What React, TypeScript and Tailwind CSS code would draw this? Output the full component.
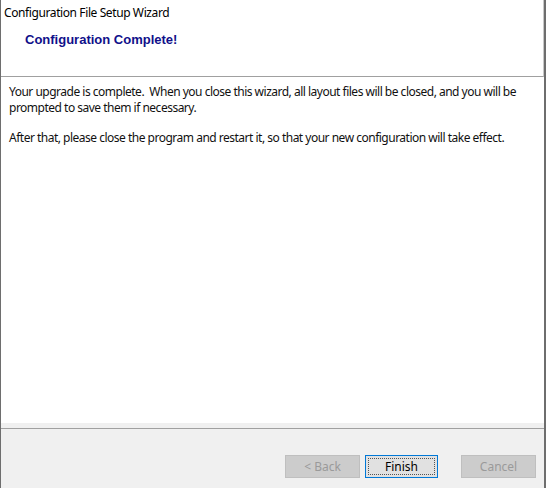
import React from 'react';

const uiFont = { fontFamily: '"Noto Sans", "Open Sans", sans-serif' };

export default function App() {
  return (
    <div
      className="w-[546px] h-[488px] flex flex-col bg-white border-l border-[#6e6e6e] text-[12px] text-black overflow-hidden"
      style={uiFont}
    >
      <div className="flex flex-1 min-h-0">
        <div className="flex flex-col flex-1 min-w-0">
          {/* Header */}
          <div className="h-[77px] border-b border-[#a0a0a0] border-r border-r-[#c8c8c8]">
            <div className="pl-[3px] pt-[5px] leading-[16px] tracking-[-0.4px]">Configuration File Setup Wizard</div>
            <div
              className="pl-[24px] pt-[10px] text-[13px] font-bold text-[#10108a] leading-[18px]"
              style={{ fontFamily: '"Liberation Sans", Arial, sans-serif' }}
            >
              Configuration Complete!
            </div>
          </div>

          {/* Body */}
          <div className="flex-1 pl-[8px] pt-[7px] leading-[16px] tracking-[-0.5px] text-[#111]">
            <p>
              Your upgrade is complete.&nbsp; When you close this wizard, all layout files will be closed, and you will be
              <br />
              prompted to save them if necessary.
            </p>
            <p className="mt-[14px]">
              After that, please close the program and restart it, so that your new configuration will take effect.
            </p>
          </div>

          {/* Footer */}
          <div className="h-[5px] bg-[#f0f0f0]" />
          <div className="h-[60px] border-t border-[#a0a0a0] bg-[#f0f0f0] flex items-start justify-end pt-[26px] pr-[8px]">
            <button className="w-[75px] h-[23px] bg-[#cccccc] border border-[#bfbfbf] text-[#9a9a9a]">&lt; Back</button>
            <button className="ml-[5px] w-[73px] h-[23px] bg-[#e1e1e1] border border-[#0078d7] p-[2px]">
              <span className="flex items-center justify-center w-full h-full border border-dotted border-[#555]">
                Finish
              </span>
            </button>
            <button className="ml-[23px] w-[75px] h-[23px] bg-[#cccccc] border border-[#bfbfbf] text-[#9a9a9a]">Cancel</button>
          </div>
        </div>
        <div className="w-[2px] bg-[#6e6e6e]" />
      </div>
    </div>
  );
}
